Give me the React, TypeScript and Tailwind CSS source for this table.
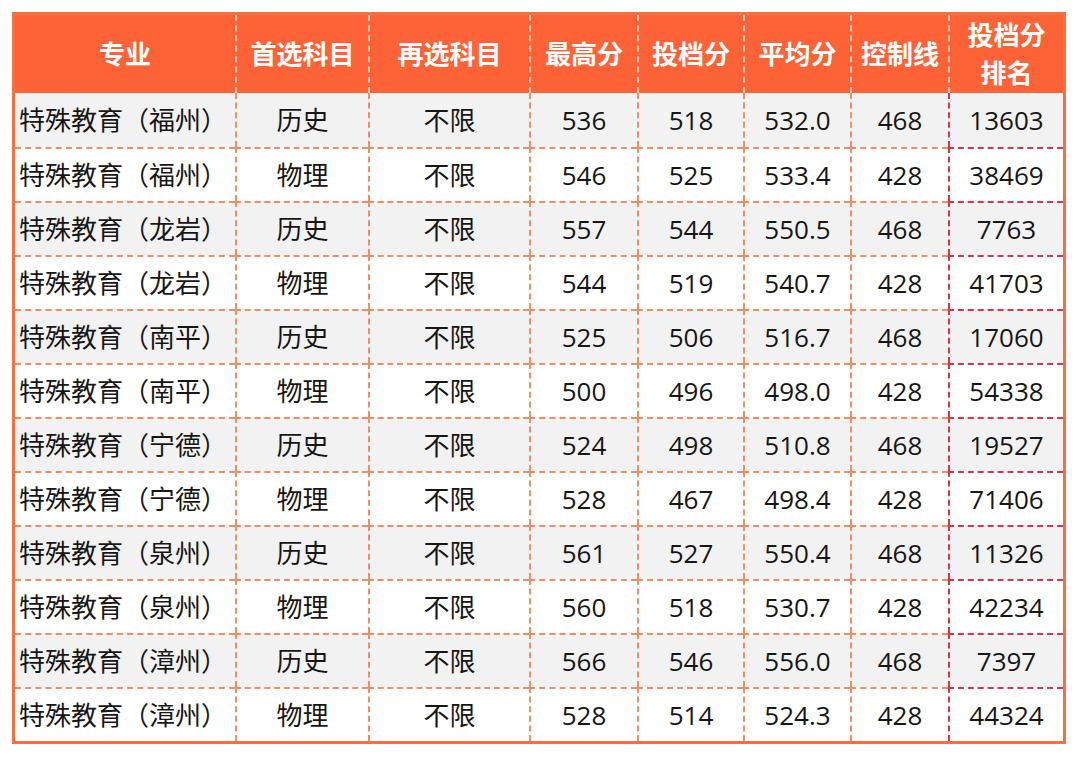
const rows: [string, string, string, string, string, string, string, string][] = [
  ["特殊教育（福州）", "历史", "不限", "536", "518", "532.0", "468", "13603"],
  ["特殊教育（福州）", "物理", "不限", "546", "525", "533.4", "428", "38469"],
  ["特殊教育（龙岩）", "历史", "不限", "557", "544", "550.5", "468", "7763"],
  ["特殊教育（龙岩）", "物理", "不限", "544", "519", "540.7", "428", "41703"],
  ["特殊教育（南平）", "历史", "不限", "525", "506", "516.7", "468", "17060"],
  ["特殊教育（南平）", "物理", "不限", "500", "496", "498.0", "428", "54338"],
  ["特殊教育（宁德）", "历史", "不限", "524", "498", "510.8", "468", "19527"],
  ["特殊教育（宁德）", "物理", "不限", "528", "467", "498.4", "428", "71406"],
  ["特殊教育（泉州）", "历史", "不限", "561", "527", "550.4", "468", "11326"],
  ["特殊教育（泉州）", "物理", "不限", "560", "518", "530.7", "428", "42234"],
  ["特殊教育（漳州）", "历史", "不限", "566", "546", "556.0", "468", "7397"],
  ["特殊教育（漳州）", "物理", "不限", "528", "514", "524.3", "428", "44324"],
]

const widths = ["w-[220px]", "w-[133px]", "w-[161px]", "w-[108px]", "w-[106px]", "w-[107px]", "w-[98px]", "w-[115px]"]

const headers = ["专业", "首选科目", "再选科目", "最高分", "投档分", "平均分", "控制线"]

export default function App() {
  return (
    <div
      className="min-h-[758px] bg-white pl-[12px] pt-[12px]"
      style={{ fontFamily: '"Open Sans", "Noto Sans CJK SC", sans-serif' }}
    >
      <div className="w-fit border-[3px] border-[#f4703f]">
        <table className="table-fixed border-separate border-spacing-0">
          <thead>
            <tr className="h-[78px] bg-[#fe6337] text-[26px] font-bold text-white">
              {headers.map((h, i) => (
                <th
                  key={h}
                  className={`${widths[i]} p-0 text-center ${
                    i > 0 ? "border-l-2 border-dashed border-[#fcc7b2]" : ""
                  }`}
                >
                  {h}
                </th>
              ))}
              <th className={`${widths[7]} border-l-2 border-dashed border-[#fcc7b2] p-0 text-center leading-[38px]`}>
                投档分
                <br />
                排名
              </th>
            </tr>
          </thead>
          <tbody>
            {rows.map((row, r) => (
              <tr
                key={r}
                className={`h-[54px] text-[26px] text-[#161616] ${r % 2 === 0 ? "bg-[#f2f2f2]" : "bg-white"}`}
              >
                {row.map((cell, c) => (
                  <td
                    key={c}
                    className={[
                      "p-0",
                      c === 0 ? "pl-[4px] text-left" : "text-center",
                      r > 0 ? "border-t-2 border-dashed" : "",
                      c > 0 ? "border-l-2 border-dashed" : "",
                      c === 7 ? "border-[#d8354c]" : "border-[#f28c62]",
                    ].join(" ")}
                  >
                    {cell}
                  </td>
                ))}
              </tr>
            ))}
          </tbody>
        </table>
      </div>
    </div>
  )
}
